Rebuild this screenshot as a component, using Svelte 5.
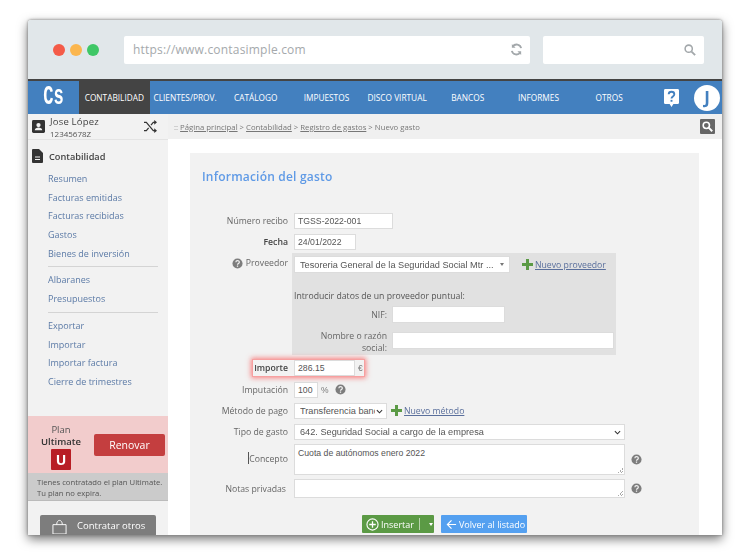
<script lang="ts">
  const navItems = [
    { label: 'CONTABILIDAD', active: true },
    { label: 'CLIENTES/PROV.' },
    { label: 'CATÁLOGO' },
    { label: 'IMPUESTOS' },
    { label: 'DISCO VIRTUAL' },
    { label: 'BANCOS' },
    { label: 'INFORMES' },
    { label: 'OTROS' },
  ]

  const menuGroups = [
    ['Resumen', 'Facturas emitidas', 'Facturas recibidas', 'Gastos', 'Bienes de inversión'],
    ['Albaranes', 'Presupuestos'],
    ['Exportar', 'Importar', 'Importar factura', 'Cierre de trimestres'],
  ]
</script>

{#snippet help()}
  <svg class="help" viewBox="0 0 12 12" width="11" height="11">
    <circle cx="6" cy="6" r="5.5" fill="#7d7d7d" />
    <path d="M4.2 4.7c0-2.3 3.8-2.3 3.8-.2 0 1.4-2 1.4-2 2.8" fill="none" stroke="#f2f2f2" stroke-width="1.3" />
    <rect x="5.3" y="8.2" width="1.4" height="1.4" fill="#f2f2f2" />
  </svg>
{/snippet}

{#snippet plus()}
  <svg viewBox="0 0 11 11" width="11" height="11">
    <path d="M4 0h3v4h4v3H7v4H4V7H0V4h4z" fill="#5b9a45" />
  </svg>
{/snippet}

<div class="window">
  <header class="chrome">
    <div class="dots">
      <span class="dot red"></span>
      <span class="dot yellow"></span>
      <span class="dot green"></span>
    </div>
    <div class="url">
      <span>https://www.contasimple.com</span>
      <svg viewBox="0 0 14 14" width="13" height="13">
        <path d="M12 5.5A5 5 0 0 0 3 3.8M2 8.5a5 5 0 0 0 9 1.7" fill="none" stroke="#a3a8ab" stroke-width="2" />
        <path d="M2 1v4h4zM12 13V9H8z" fill="#a3a8ab" />
      </svg>
    </div>
    <div class="search">
      <svg viewBox="0 0 14 14" width="12" height="12">
        <circle cx="5.5" cy="5.5" r="4.2" fill="none" stroke="#a3a8ab" stroke-width="1.8" />
        <path d="M8.8 8.8L13 13" stroke="#a3a8ab" stroke-width="2.2" />
      </svg>
    </div>
  </header>

  <nav class="nav">
    <div class="logo"><span>Cs</span></div>
    {#each navItems as item}
      <div class="nav-item" class:active={item.active}>{item.label}</div>
    {/each}
    <div class="nav-right">
      <svg viewBox="0 0 16 19" width="15" height="18">
        <path d="M1.500 0h13A1.500 1.500 0 0 1 16 1.500v13a1.500 1.500 0 0 1-1.500 1.500H10l-2 3-2-3H1.500A1.500 1.500 0 0 1 0 14.500v-13A1.500 1.500 0 0 1 1.500 0z" fill="#fff" />
        <path d="M5 5.500c0-3.500 6-3.500 6 0 0 2.300-3 2.300-3 4.500" fill="none" stroke="#4380bf" stroke-width="2" />
        <rect x="7" y="11.500" width="2" height="2" fill="#4380bf" />
      </svg>
      <div class="avatar">J</div>
    </div>
  </nav>

  <div class="body">
    <aside class="sidebar">
      <div class="user">
        <svg viewBox="0 0 14 14" width="13" height="13">
          <rect width="14" height="14" rx="1.500" fill="#333" />
          <circle cx="7" cy="5.500" r="2.300" fill="#f2f2f2" />
          <path d="M3 11c0-4 8-4 8 0z" fill="#f2f2f2" />
        </svg>
        <div class="user-text">
          <div class="user-name">Jose López</div>
          <div class="user-id">12345678Z</div>
        </div>
        <svg class="shuffle" viewBox="0 0 14 14" width="13" height="13">
          <path d="M0 2.500h2.500L10 11.500h2M0 11.500h2.500L5 8.500M7.500 5.500l2.500-3h2" fill="none" stroke="#333" stroke-width="1.300" />
          <path d="M11 0l3 2.500L11 5zM11 9l3 2.500L11 14z" fill="#333" />
        </svg>
      </div>

      <div class="section">
        <svg viewBox="0 0 11 14" width="11" height="14">
          <path d="M1 0h6l4 4v9a1 1 0 0 1-1 1H1a1 1 0 0 1-1-1V1a1 1 0 0 1 1-1z" fill="#333" />
          <path d="M3 8h5M3 10.500h5" stroke="#f2f2f2" />
        </svg>
        <span>Contabilidad</span>
      </div>

      <div class="menu">
        {#each menuGroups as group, i}
          {#if i > 0}<hr />{/if}
          <ul>
            {#each group as entry}
              <li>{entry}</li>
            {/each}
          </ul>
        {/each}
      </div>

      <div class="plan">
        <div class="plan-name">
          <div>Plan</div>
          <strong>Ultimate</strong>
          <span class="plan-badge">U</span>
        </div>
        <div class="renew">Renovar</div>
      </div>
      <div class="plan-note">Tienes contratado el plan Ultimate.<br />Tu plan no expira.</div>
      <div class="other-wrap">
        <div class="other">
          <svg viewBox="0 0 16 16" width="15" height="15">
            <path d="M1 6h14v10H1zM5 6c0-6 6-6 6 0" fill="none" stroke="#fff" stroke-width="1" />
          </svg>
          <span>Contratar otros</span>
        </div>
      </div>
    </aside>

    <main class="content">
      <div class="crumbs">
        <div><span class="sep">::</span> <u>Página principal</u> &gt; <u>Contabilidad</u> &gt; <u>Registro de gastos</u> &gt; Nuevo gasto</div>
        <div class="crumb-search">
          <svg viewBox="0 0 14 14" width="11" height="11">
            <circle cx="5.500" cy="5.500" r="4" fill="none" stroke="#fff" stroke-width="2" />
            <path d="M8.500 8.500L13 13" stroke="#fff" stroke-width="2.500" />
          </svg>
        </div>
      </div>

      <section class="card">
        <h2>Información del gasto</h2>
        <div class="form">
          <div class="row r-numero">
            <label>Número recibo</label>
            <div class="field" style="width: 99px">TGSS-2022-001</div>
          </div>
          <div class="row r-fecha">
            <label class="strong">Fecha</label>
            <div class="field" style="width: 62px">24/01/2022</div>
          </div>
          <div class="row r-prov">
            <label class="with-help">{@render help()} Proveedor</label>
            <div class="prov-box">
              <div class="prov-top">
                <div class="field select">
                  <span>Tesoreria General de la Seguridad Social Mtr ...</span>
                  <i class="caret"></i>
                </div>
                <div class="add">{@render plus()} <u>Nuevo proveedor</u></div>
              </div>
              <div class="prov-title">Introducir datos de un proveedor puntual:</div>
              <div class="prov-row nif">
                <label>NIF:</label>
                <div class="field" style="width: 113px"></div>
              </div>
              <div class="prov-row razon">
                <label>Nombre o razón social:</label>
                <div class="field" style="width: 222px"></div>
              </div>
            </div>
          </div>
          <div class="row r-importe">
            <label class="strong">Importe</label>
            <div class="field" style="width: 61px">286.15</div>
            <span class="unit">€</span>
          </div>
          <div class="row r-imput">
            <label>Imputación</label>
            <div class="field" style="width: 24px">100</div>
            <span class="unit">%</span>
            {@render help()}
          </div>
          <div class="row r-metodo">
            <label>Método de pago</label>
            <div class="field select" style="width: 93px">
              <span class="clip">Transferencia bancaria</span>
              <svg class="chev" viewBox="0 0 8 5" width="7" height="5"><path d="M1 1l3 3 3-3" fill="none" stroke="#333" stroke-width="1.200" /></svg>
            </div>
            <div class="add add-m">{@render plus()} <u>Nuevo método</u></div>
          </div>
          <div class="row r-tipo">
            <label>Tipo de gasto</label>
            <div class="field select" style="width: 331px">
              <span>642. Seguridad Social a cargo de la empresa</span>
              <svg class="chev" viewBox="0 0 8 5" width="7" height="5"><path d="M1 1l3 3 3-3" fill="none" stroke="#333" stroke-width="1.200" /></svg>
            </div>
          </div>
          <div class="row r-concepto">
            <label><span class="cursor"></span>Concepto</label>
            <div class="field area" style="width: 331px; height: 31px">Cuota de autónomos enero 2022<i class="grip"></i></div>
            {@render help()}
          </div>
          <div class="row r-notas">
            <label class="notas">Notas privadas</label>
            <div class="field area" style="width: 331px; height: 19px"><i class="grip"></i></div>
            {@render help()}
          </div>
        </div>
        <div class="actions">
          <div class="btn green">
            <svg viewBox="0 0 14 14" width="13" height="13">
              <circle cx="7" cy="7" r="6" fill="none" stroke="#fff" stroke-width="1.200" />
              <path d="M7 3.500v7M3.500 7h7" stroke="#fff" stroke-width="1.400" />
            </svg>
            <span>Insertar</span>
            <i class="divider"></i>
            <i class="btn-caret"></i>
          </div>
          <div class="btn blue">
            <svg viewBox="0 0 12 12" width="11" height="11">
              <path d="M11 6H2M6 1.500L1.500 6 6 10.500" fill="none" stroke="#fff" stroke-width="1.300" />
            </svg>
            <span>Volver al listado</span>
          </div>
        </div>
      </section>
    </main>
  </div>
</div>

<style>
  :global(body) {
    margin: 0;
    background: #fff;
    font-family: 'Open Sans', sans-serif;
    color: #555;
  }
  :global(#app) {
    height: 552px;
    overflow: hidden;
  }
  .window {
    position: relative;
    margin: 20px 28px 0;
    width: 694px;
    height: 515px;
    overflow: hidden;
    border-radius: 3px 3px 0 0;
    background: #fff;
    display: flex;
    flex-direction: column;
    box-shadow: 0 0 3px #777, 0 4px 11px rgba(0, 0, 0, 0.55);
    filter: blur(0.3px);
  }

  .chrome {
    height: 59px;
    flex: none;
    background: #e1e7ea;
    display: flex;
    align-items: center;
    padding-left: 25px;
    box-sizing: border-box;
  }
  .dots { display: flex; gap: 5px; width: 71px; flex: none; }
  .dot { width: 12px; height: 12px; border-radius: 50%; }
  .red { background: #f45b48; }
  .yellow { background: #fbb64e; }
  .dot.green { background: #3fc766; }
  .url {
    width: 406px;
    height: 28px;
    background: #fff;
    border-radius: 2px;
    display: flex;
    align-items: center;
    justify-content: space-between;
    padding: 0 7px 0 9px;
    box-sizing: border-box;
    font-size: 12px;
    color: #a5a9ac;
    letter-spacing: 0.2px;
    flex: none;
  }
  .search {
    width: 161px;
    height: 28px;
    margin-left: 13px;
    background: #fff;
    border-radius: 2px;
    display: flex;
    align-items: center;
    justify-content: flex-end;
    padding-right: 8px;
    box-sizing: border-box;
    flex: none;
  }

  .nav {
    height: 33px;
    flex: none;
    border-top: 2px solid #444;
    background: #4380bf;
    display: flex;
    align-items: center;
    color: #fff;
    font-size: 8.300px;
  }
  .logo {
    width: 51px;
    flex: none;
    text-align: center;
    font-family: 'Liberation Mono', monospace;
    font-weight: 700;
    font-size: 19px;
    line-height: 33px;
  }
  .logo span { display: inline-block; transform: scale(0.9, 1.500); }
  .nav-item {
    width: 70.700px;
    height: 33px;
    line-height: 33px;
    text-align: center;
    white-space: nowrap;
    flex: none;
  }
  .nav-item.active { background: #444; }
  .nav-right {
    flex: 1;
    display: flex;
    align-items: center;
    justify-content: flex-end;
    gap: 15px;
    padding-right: 2px;
  }
  .avatar {
    width: 26px;
    height: 26px;
    border-radius: 50%;
    background: #fff;
    color: #4380bf;
    font-size: 17px;
    font-weight: 700;
    text-align: center;
    line-height: 26px;
  }

  .body { flex: 1; display: flex; min-height: 0; }
  .sidebar {
    width: 140px;
    flex: none;
    background: #f2f2f2;
    display: flex;
    flex-direction: column;
    font-size: 9px;
    overflow: hidden;
  }
  .user {
    height: 25px;
    flex: none;
    display: flex;
    align-items: center;
    padding-left: 4px;
    border-bottom: 1px solid #e4e4e4;
  }
  .user-text { margin-left: 5px; flex: 1; padding-top: 1px; }
  .user-name { font-size: 9.500px; line-height: 12px; color: #444; letter-spacing: 0.2px; }
  .user-id { font-size: 8px; line-height: 11px; color: #555; }
  .shuffle { margin-right: 11px; }
  .section {
    display: flex;
    align-items: center;
    gap: 6px;
    margin: 9px 0 0 4px;
    height: 14px;
    flex: none;
    font-size: 9.200px;
    font-weight: 600;
    color: #444;
  }
  .menu { margin: 7px 10px 0 20px; color: #5b7aa6; height: 246px; flex: none; }
  .menu ul { list-style: none; margin: 0; padding: 0; }
  .menu li { height: 18.700px; line-height: 18.700px; white-space: nowrap; }
  .menu hr { border: 0; border-top: 1px solid #d4d4d4; margin: 3px 0 4px; }
  .plan {
    height: 57px;
    flex: none;
    background: #f2cccc;
    display: flex;
    align-items: center;
  }
  .plan-name { width: 66px; flex: none; text-align: center; font-size: 9.500px; line-height: 12px; color: #555; padding-top: 4px; }
  .plan-name strong { display: block; font-weight: 600; color: #333; }
  .plan-badge {
    display: block;
    width: 20px;
    height: 21px;
    line-height: 21px;
    margin: 1px auto 0;
    background: #b81e25;
    color: #fff;
    border-radius: 1px;
    font-size: 14px;
    font-weight: 700;
  }
  .renew {
    width: 71px;
    height: 22px;
    line-height: 22px;
    background: #c43e3f;
    color: #fff;
    border-radius: 2px;
    text-align: center;
    font-size: 10.500px;
  }
  .plan-note {
    flex: none;
    height: 28px;
    background: #cbcbcb;
    font-size: 7.700px;
    line-height: 10.500px;
    padding: 4px 0 0 9px;
    box-sizing: border-box;
    color: #555;
    border-bottom: 1px solid #bbb;
    white-space: nowrap;
  }
  .other-wrap { padding: 14px 0 0 12px; flex: none; }
  .other {
    width: 116px;
    height: 24px;
    background: #7d7d7d;
    border-radius: 2px;
    color: #fff;
    display: flex;
    align-items: flex-start;
    gap: 10px;
    padding: 4px 0 0 12px;
    box-sizing: border-box;
    font-size: 9.500px;
    overflow: hidden;
  }

  .content { flex: 1; min-width: 0; background: #fff; }
  .crumbs {
    height: 25px;
    background: #f0f0f0;
    display: flex;
    align-items: center;
    justify-content: space-between;
    padding: 0 7px 0 6px;
    font-size: 7.750px;
    color: #777;
  }
  .sep { color: #999; }
  .crumb-search {
    width: 15px;
    height: 15px;
    background: #666;
    border-radius: 1px;
    display: flex;
    align-items: center;
    justify-content: center;
  }
  .card {
    margin: 14px 23px 0 22px;
    height: 400px;
    background: #f2f2f2;
    padding: 0 0 0 12px;
    box-sizing: border-box;
    overflow: hidden;
  }
  h2 {
    margin: 14px 0 0;
    padding-top: 1px;
    font-size: 12px;
    line-height: 17px;
    font-weight: 600;
    color: #5f9ae6;
    letter-spacing: 0.2px;
  }
  .form { margin-top: 28px; font-size: 8.700px; }
  .row {
    position: relative;
    display: flex;
    align-items: flex-start;
    min-height: 16px;
  }
  .row > label {
    width: 86px;
    margin-right: 6px;
    flex: none;
    text-align: right;
    line-height: 16px;
    white-space: nowrap;
    color: #666;
  }
  .row > label.strong { font-weight: 600; color: #444; }
  .row > label.notas { width: 84px; margin-right: 8px; margin-top: 2px; }
  .with-help { display: flex; justify-content: flex-end; align-items: center; gap: 3px; }
  .field {
    height: 16px;
    background: #fff;
    border: 1px solid #dcdcdc;
    box-sizing: border-box;
    font-family: 'Liberation Sans', Arial, sans-serif;
    font-size: 8.700px;
    line-height: 14px;
    padding: 0 3px;
    color: #555;
    white-space: nowrap;
    flex: none;
    position: relative;
  }
  .select { display: flex; align-items: center; padding-left: 5px; font-size: 9.200px; }
  .select span { flex: 1; overflow: hidden; }
  .clip { overflow: hidden; }
  .chev { flex: none; margin-left: 1px; }
  .help { flex: none; }
  .unit { margin-left: 3px; line-height: 16px; color: #777; font-family: 'Liberation Sans', Arial, sans-serif; font-size: 8.500px; }

  .r-fecha { margin-top: 5px; }
  .r-prov { margin-top: 3px; }
  .r-prov > label { line-height: 20px; height: 20px; }
  .prov-box {
    width: 324px;
    height: 102px;
    margin-left: -2px;
    background: #e1e1e1;
    padding: 3px 0 0 2px;
    box-sizing: border-box;
  }
  .prov-top { display: flex; align-items: center; }
  .prov-top .field { width: 216px; height: 17px; }
  .caret {
    width: 0;
    height: 0;
    margin: 0 2px 0 4px;
    border: 2.500px solid transparent;
    border-top: 3px solid #777;
    border-bottom: 0;
    flex: none;
  }
  .add { display: flex; align-items: center; gap: 2px; color: #5a6f9c; font-size: 8.700px; margin-left: 12px; }
  .add-m { margin-left: 4px; height: 15px; }
  .prov-title { margin-top: 17px; line-height: 12px; color: #555; }
  .prov-row { display: flex; align-items: flex-start; }
  .prov-row label { width: 93px; text-align: right; margin-right: 5px; line-height: 12px; color: #666; flex: none; }
  .prov-row .field { height: 17px; }
  .nif { margin-top: 4px; }
  .nif label { line-height: 18px; }
  .razon { margin-top: 8px; }
  .razon label { margin-top: -2px; }

  .r-importe { margin-top: 5px; }
  .r-importe::before {
    content: '';
    position: absolute;
    left: 50px;
    top: -1px;
    width: 113px;
    height: 18px;
    border: 1px solid #f7a0a0;
    box-sizing: border-box;
    box-shadow: 0 0 5px 1px rgba(250, 80, 80, 0.7);
    pointer-events: none;
  }
  .r-imput { margin-top: 6px; }
  .r-imput .help { margin: 2px 0 0 6px; }
  .r-metodo { margin-top: 5px; }
  .r-tipo { margin-top: 5px; }
  .r-concepto { margin-top: 4px; }
  .r-concepto > label { line-height: 31px; height: 31px; }
  .r-concepto .help { margin: 10px 0 0 6px; }
  .r-notas { margin-top: 4px; }
  .r-notas .help { margin: 4px 0 0 6px; }
  .cursor {
    display: inline-block;
    width: 1px;
    height: 12px;
    background: #555;
    vertical-align: -2px;
  }
  .area { line-height: 14px; padding-top: 1px; }
  .grip {
    position: absolute;
    right: 1px;
    bottom: 1px;
    width: 5px;
    height: 5px;
    background: linear-gradient(135deg, transparent 50%, #aaa 50%, #aaa 60%, transparent 60%, transparent 75%, #aaa 75%, #aaa 85%, transparent 85%);
  }

  .actions {
    margin: 17px 0 0 160px;
    display: flex;
    gap: 7px;
  }
  .btn {
    height: 18px;
    border-radius: 1px;
    color: #fff;
    display: flex;
    align-items: center;
    box-sizing: border-box;
    font-size: 9px;
    padding-left: 4px;
    gap: 2px;
    white-space: nowrap;
  }
  .btn.green { width: 72px; background: #5b9a45; }
  .btn.blue { width: 86px; background: #54a0f0; padding-left: 5px; }
  .divider { width: 1px; height: 12px; background: #b8d4ac; margin: 0 5px 0 3px; }
  .btn-caret {
    width: 0;
    height: 0;
    border: 2.500px solid transparent;
    border-top: 3px solid #fff;
    border-bottom: 0;
    margin-left: 2px;
  }
</style>
